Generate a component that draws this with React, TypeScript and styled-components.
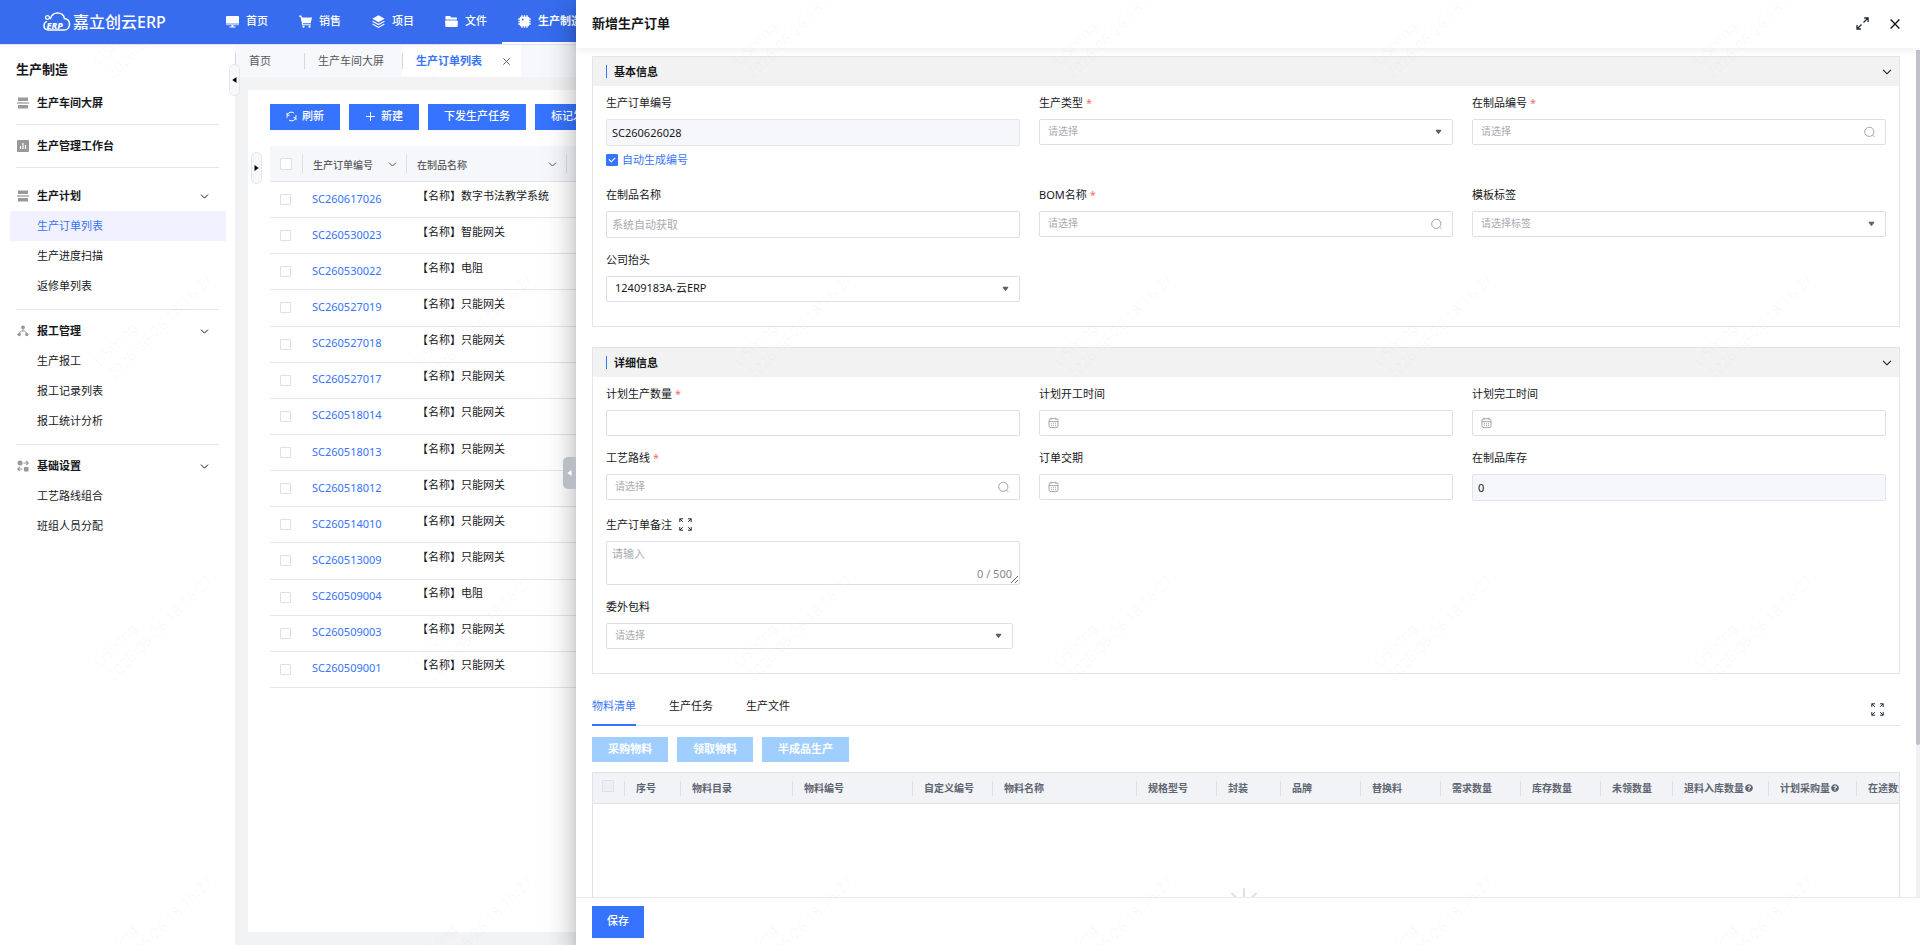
import React, { useId } from "react";
import styled, { createGlobalStyle, css } from "styled-components";
import { FaQuestionCircle } from "react-icons/fa";

const color = {
  brand: "#3673ff",
  header: "#376cee",
  text: "#17181c",
  muted: "#a8abb2",
  line: "#e3e5ea",
  input: "#dcdfe6",
};

const GlobalStyle = createGlobalStyle`
  *, *::before, *::after { box-sizing: border-box; }
  body { margin: 0; }
  body, button, input, select, textarea {
    font-family: "Noto Sans", "Noto Sans CJK SC", sans-serif;
    font-size: 11px;
    line-height: 16px;
    color: ${color.text};
  }
  button { border: 0; padding: 0; background: none; cursor: pointer; }
  a { color: inherit; text-decoration: none; }
  svg { display: block; flex: none; }
`;

/* ---------- icons ---------- */

const LogoMark = () => (
  <svg width="28" height="20" viewBox="0 0 28 20" fill="none" stroke="#fff" strokeWidth="1.5" strokeLinecap="round">
    <circle cx="4.5" cy="5.5" r="1.9" strokeWidth="1.2" />
    <path d="M7.5 6.5C8.5 3 11.3 1 14.5 1c3.6 0 6.4 2.3 7 5.6 3 .4 5 2.7 5 5.6 0 3.3-2.2 5.8-5.3 5.9H5.4C2.8 18 1 16.100 1 13.600c0-1.900 1-3.300 2.500-4" />
    <text x="3.500" y="16.500" fontSize="9" fontWeight="800" fontStyle="italic" fill="#fff" stroke="none">ERP</text>
  </svg>
);
const MonitorIcon = () => (
  <svg width="13" height="13" viewBox="0 0 13 13" fill="#fff">
    <path d="M1 1h11a1 1 0 0 1 1 1v6H0V2a1 1 0 0 1 1-1z" />
    <path d="M0 8h13v1.200a1 1 0 0 1-1 1H1a1 1 0 0 1-1-1z" opacity=".6" />
    <path d="M5.500 10h2v1.500h2v1h-6v-1h2z" />
  </svg>
);
const CartIcon = () => (
  <svg width="13" height="13" viewBox="0 0 13 13" fill="#fff">
    <path d="M0 .6h1.900c.4 0 .7.3.8.7l.2 1.200H13l-1.300 5.700H4l.2 1.100h7.600v1H3.300L1.500 1.700H0z" />
    <circle cx="4.500" cy="11.700" r="1.100" />
    <circle cx="10.500" cy="11.700" r="1.100" />
  </svg>
);
const LayersIcon = () => (
  <svg width="13" height="13" viewBox="0 0 13 13" fill="#fff">
    <path d="M6.500.3 12.600 3.700 6.500 7.200.4 3.700z" />
    <path d="M.6 6.300l5.900 3.300 5.900-3.300M.6 9.100l5.900 3.300 5.900-3.300" fill="none" stroke="#fff" strokeWidth="1.200" />
  </svg>
);
const FolderIcon = () => (
  <svg width="13" height="13" viewBox="0 0 13 13" fill="#fff">
    <path d="M.5 1H5l1.300 1.600H12v2H.5z" />
    <path d="M.5 4.600H12v1.500H.5z" opacity=".6" />
    <path d="M0 6.100h13l-.5 5.900H.5z" />
  </svg>
);
const ChipIcon = () => (
  <svg width="13" height="13" viewBox="0 0 13 13">
    <path d="M4 .3v12.400M6.500.3v12.400M9 .3v12.400M.3 4h12.400M.3 6.500h12.400M.3 9h12.400" stroke="#fff" strokeWidth="1.400" />
    <rect x="1.800" y="1.800" width="9.400" height="9.400" rx="1" fill="#fff" />
    <circle cx="4.800" cy="4.500" r=".9" fill={color.header} />
  </svg>
);
const ScreenIcon = () => (
  <svg width="12" height="12" viewBox="0 0 12 12" fill="#999">
    <path d="M1 .5h10V4H1zM1 8h10v3.500H1z" />
    <path d="M0 5h12v2H0z" opacity=".65" />
  </svg>
);
const BenchIcon = () => (
  <svg width="12" height="12" viewBox="0 0 12 12">
    <rect x="0" y="0" width="12" height="12" rx="1" fill="#999" />
    <path d="M3.500 9V6M6 9V3M8.500 9V5" stroke="#fff" strokeWidth="1.200" />
  </svg>
);
const TreeIcon = () => (
  <svg width="12" height="12" viewBox="0 0 12 12" fill="#999">
    <circle cx="6" cy="2.300" r="1.900" />
    <circle cx="2.200" cy="9.500" r="1.700" />
    <circle cx="9.800" cy="9.500" r="1.700" />
    <path d="M6 4v2M2.500 8C3 6.500 4 6 6 6s3 .5 3.500 2" fill="none" stroke="#999" strokeWidth="1" />
  </svg>
);
const FlowIcon = () => (
  <svg width="12" height="12" viewBox="0 0 12 12" fill="#999">
    <circle cx="3" cy="3" r="2.500" />
    <rect x="7" y="7" width="4.500" height="4.500" rx=".8" />
    <path d="M6.500 3h4.500M9.300 1l2 2-2 2M5.500 9H1M2.700 7l-2 2 2 2" fill="none" stroke="#999" strokeWidth="1.100" />
  </svg>
);
const Chevron = ({ size = 9 }: { size?: number }) => (
  <svg width={size} height={size} viewBox="0 0 9 9" fill="none" stroke="currentColor" strokeWidth="1">
    <path d="M1 2.600l3.500 3.500L8 2.600" />
  </svg>
);
const RefreshIcon = () => (
  <svg width="11" height="11" viewBox="0 0 11 11" fill="none" stroke="#fff" strokeWidth="1">
    <path d="M9.800 6.800A4.400 4.400 0 0 1 3 9M1.200 4.200A4.400 4.400 0 0 1 8 2M1.100 6.800A4.400 4.400 0 0 1 1 5M9.900 4.200a4.400 4.400 0 0 1 .1 1.800" />
    <path d="M1 1.800v2.500h2.500M10 9.200V6.700H7.500" />
  </svg>
);
const PlusIcon = () => (
  <svg width="11" height="11" viewBox="0 0 11 11" stroke="#fff" strokeWidth="1">
    <path d="M5.500 1v9M1 5.500h9" />
  </svg>
);
const CloseIcon = ({ size = 10, weight = 1.4 }: { size?: number; weight?: number }) => (
  <svg width={size} height={size} viewBox="0 0 10 10" stroke="currentColor" strokeWidth={weight}>
    <path d="M.6.6l8.800 8.800M9.400.6L.6 9.400" />
  </svg>
);
const EnlargeIcon = () => (
  <svg width="13" height="13" viewBox="0 0 13 13" fill="none" stroke="#222b36" strokeWidth="1.300">
    <path d="M8.200 1h3.900v3.900M12 1L7.500 5.500M4.900 12H1V8.100M1 12l4.500-4.500" />
  </svg>
);
const FullscreenIcon = () => (
  <svg width="13" height="13" viewBox="0 0 13 13" fill="none" stroke="#222b36" strokeWidth="1">
    <path d="M.8 4V.8H4M.8.800l3 3M9 .8h3.200V4M12.200.8l-3 3M.8 9v3.200H4M.8 12.200l3-3M9 12.200h3.200V9M12.200 12.200l-3-3" />
  </svg>
);
const SearchIcon = () => (
  <svg width="11" height="11" viewBox="0 0 11 11" fill="none" stroke="#a0a3aa" strokeWidth="1">
    <circle cx="5.300" cy="5.300" r="4.600" />
    <path d="M8.600 8.600l1.700 1.700" />
  </svg>
);
const CaretIcon = () => (
  <svg width="7" height="6" viewBox="0 0 7 6" fill="#5c6070">
    <path d="M1.200.8h4.600a.6.6 0 0 1 .4 1L3.900 4.800a.6.600 0 0 1-.8 0L.8 1.800a.6.600 0 0 1 .4-1z" />
  </svg>
);
const CalendarIcon = () => (
  <svg width="11" height="11" viewBox="0 0 11 11" fill="none" stroke="#a0a3aa" strokeWidth="1">
    <rect x="1" y="1.200" width="9" height="9" rx="2" />
    <path d="M1 4.200h9M3.200 0v2M7.800 0v2" />
    <path d="M3 6.300h1M5 6.300h1M7 6.300h1M3 8.200h1M5 8.200h1M7 8.200h1" />
  </svg>
);
const SpinnerIcon = () => (
  <svg width="34" height="34" viewBox="0 0 34 34" stroke="#dfe1e6" strokeWidth="2" strokeLinecap="round">
    <path d="M17 1v8M17 25v8M1 17h8M25 17h8M5 5.500l6 6M23 23l6 6M29 5.500l-6 6M11 23l-6 6" />
  </svg>
);
const Triangle = ({ left, fill = "#000" }: { left?: boolean; fill?: string }) => (
  <svg width="5" height="6" viewBox="0 0 5 6" fill={fill}>
    <path d={left ? "M4.500 0v6L.3 3z" : "M.5 0v6l4.200-3z"} />
  </svg>
);

/* ---------- shell ---------- */

const Shell = styled.div`
  position: relative;
  display: flex;
  flex-direction: column;
  height: 100vh;
  min-height: 700px;
  overflow: hidden;
  background: #f2f3f5;
`;
const TopBar = styled.header`
  display: flex;
  flex: none;
  height: 45px;
  background: ${color.header};
  border-bottom: 1px solid ${color.line};
`;
const Logo = styled.a`
  display: flex;
  align-items: center;
  gap: 2px;
  width: 210px;
  padding-left: 43px;
  font-size: 16px;
  font-weight: 500;
  color: #fff;
`;
const Nav = styled.nav`
  display: flex;
`;
const NavItem = styled.a<{ $active?: boolean }>`
  display: flex;
  align-items: center;
  gap: 7px;
  padding: 0 15px 2px 16px;
  color: #fff;
  font-weight: ${(p) => (p.$active ? 700 : 500)};
  box-shadow: ${(p) => (p.$active ? "inset 0 -2px 0 #fff" : "none")};
  white-space: nowrap;
`;
const Columns = styled.div`
  display: flex;
  flex: 1;
  min-height: 0;
`;
const Sidebar = styled.aside`
  position: relative;
  flex: none;
  width: 235px;
  padding: 15px 9px 0 10px;
  background: #fff;
`;
const SidebarTitle = styled.h1`
  margin: 0 0 10px;
  padding-left: 6px;
  font-size: 13px;
  line-height: 18px;
  font-weight: 700;
`;
const Group = styled.section<{ $spaced?: boolean; $single?: boolean }>`
  margin-bottom: ${(p) => (p.$spaced ? 13 : 6)}px;
  &:not(:last-of-type)::after {
    content: "";
    display: block;
    height: 1px;
    margin: ${(p) => (p.$single ? 6 : 8)}px 7px 0 6px;
    background: ${color.line};
  }
`;
const GroupHead = styled.button`
  display: flex;
  align-items: center;
  gap: 8px;
  width: 100%;
  height: 30px;
  padding: 0 17px 0 7px;
  font-weight: 700;
  text-align: left;
  span { flex: 1; }
`;
const SubLink = styled.a<{ $active?: boolean }>`
  display: flex;
  align-items: center;
  height: 30px;
  padding-left: 27px;
  color: ${(p) => (p.$active ? color.brand : color.text)};
  background: ${(p) => (p.$active ? "#f1f1ff" : "transparent")};
`;
const Pill = styled.button<{ $side: "sidebar" | "panel" }>`
  position: absolute;
  z-index: 1;
  display: flex;
  align-items: center;
  justify-content: center;
  width: 11px;
  height: 32px;
  border: 1px solid ${color.line};
  border-radius: 6px;
  background: #f7f8fa;
  ${(p) =>
    p.$side === "sidebar"
      ? css`
          top: 19px;
          right: -5px;
        `
      : css`
          top: 62px;
          left: 3px;
        `}
`;
const Main = styled.main`
  display: flex;
  flex-direction: column;
  flex: 1;
  min-width: 0;
  padding-bottom: 13px;
`;
const PageTabs = styled.nav`
  display: flex;
  flex: none;
  height: 32px;
  margin-bottom: 13px;
  background: #f7f8fb;
`;
const PageTab = styled.a<{ $active?: boolean; $wide?: boolean }>`
  position: relative;
  display: flex;
  align-items: center;
  gap: 21px;
  padding: 0 ${(p) => (p.$active ? 11 : p.$wide ? 33 : 18)}px 0 14px;
  color: ${(p) => (p.$active ? color.brand : "#55575c")};
  font-weight: ${(p) => (p.$active ? 700 : 400)};
  background: ${(p) => (p.$active ? "#fff" : "transparent")};
  &::before {
    content: "";
    position: absolute;
    left: 0;
    top: 8px;
    height: 16px;
    border-left: 1px solid #d5d7dc;
  }
  button { color: #55575c; }
`;
const Panel = styled.div`
  position: relative;
  flex: 1;
  min-height: 0;
  margin-left: 13px;
  padding: 14px 0 0 22px;
  background: #fff;
  overflow: hidden;
`;
const ButtonRow = styled.div<{ $gapBelow: number }>`
  display: flex;
  gap: 9px;
  margin-bottom: ${(p) => p.$gapBelow}px;
`;
const Button = styled.button<{ $size?: "small" | "large" }>`
  display: flex;
  align-items: center;
  justify-content: center;
  gap: 5px;
  height: ${(p) => (p.$size === "small" ? 25 : p.$size === "large" ? 32 : 26)}px;
  padding: 0 ${(p) => (p.$size === "large" ? 15 : 16)}px 2px;
  font-weight: 500;
  color: #fff;
  white-space: nowrap;
  background: ${color.brand};
  &:disabled {
    background: #a0cfff;
    font-weight: 700;
  }
`;

/* ---------- order list ---------- */

const OrderTable = styled.table`
  width: 100%;
  height: 542px;
  table-layout: fixed;
  border-spacing: 0;
  th, td {
    padding: 0;
    border-bottom: 1px solid #e5e6ea;
    text-align: left;
    font-weight: 400;
    white-space: nowrap;
  }
  thead th {
    position: relative;
    height: 36px;
    background: #f6f7fa;
    border-color: #e0e2ea;
    color: #5a5c62;
    font-size: 10px;
    font-weight: 500;
  }
  thead th:not(:last-child)::after {
    content: "";
    position: absolute;
    right: 0;
    top: 8px;
    height: 19px;
    border-right: 1px solid #dcdee4;
  }
  tbody td { height: 36px; }
`;
const HeadCell = styled.span`
  display: flex;
  align-items: center;
  justify-content: space-between;
  padding: 2px 10px 0 10px;
`;
const OrderLink = styled.a`
  display: block;
  padding: 0 0 2px 9px;
  color: ${color.brand};
`;
const ProductName = styled.span`
  display: block;
  padding: 0 0 8px 10px;
`;
const Box = styled.input.attrs({ type: "checkbox" })`
  appearance: none;
  position: relative;
  display: block;
  flex: none;
  width: 12px;
  height: 12px;
  margin: 0;
  border: 1px solid ${color.input};
  border-radius: 1px;
  background: #fff;
  td &, th & { margin-left: 10px; }
  td & { width: 11px; height: 11px; }
  &:disabled { margin-left: 9px; background: #edeff3; }
  &:checked {
    background: ${color.brand};
    border-color: ${color.brand};
  }
  &:checked::after {
    content: "";
    position: absolute;
    left: 3px;
    top: 1px;
    width: 4px;
    height: 6px;
    border: solid #fff;
    border-width: 0 1px 1px 0;
    transform: rotate(45deg);
  }
`;

/* ---------- drawer ---------- */

const Drawer = styled.aside`
  position: absolute;
  top: 0;
  right: 0;
  bottom: 0;
  z-index: 2;
  display: flex;
  flex-direction: column;
  width: 70%;
  background: #fff;
  box-shadow: 0 8px 10px -5px rgba(0, 0, 0, 0.2), 0 16px 24px 2px rgba(0, 0, 0, 0.14), 0 6px 30px 5px rgba(0, 0, 0, 0.12);
`;
const DrawerHandle = styled.button`
  position: absolute;
  left: -13px;
  top: calc(50% - 16px);
  display: flex;
  align-items: center;
  justify-content: center;
  width: 13px;
  height: 32px;
  border-radius: 5px 0 0 5px;
  background: #b9bec5;
`;
const DrawerHead = styled.header`
  position: relative;
  z-index: 1;
  display: flex;
  flex: none;
  align-items: center;
  gap: 21px;
  height: 48px;
  padding: 0 20px 1px 16px;
  background: #fff;
  box-shadow: 0 2px 8px rgba(0, 0, 0, 0.07);
  h2 {
    flex: 1;
    margin: 0;
    padding-bottom: 2px;
    font-size: 13px;
    line-height: 20px;
    font-weight: 700;
  }
`;
const DrawerBody = styled.div`
  position: relative;
  flex: 1;
  min-height: 0;
  padding: 8px 20px 0 16px;
  overflow: hidden;
`;
const ScrollTrack = styled.div`
  position: absolute;
  top: 2px;
  right: 0;
  bottom: 0;
  width: 4px;
  background: #f1f1f3;
  &::before {
    content: "";
    display: block;
    height: 82%;
    border-radius: 0 0 2px 2px;
    background: #bfc3c9;
  }
`;
const DrawerFoot = styled.footer`
  flex: none;
  display: flex;
  padding: 8px 16px 7px;
  border-top: 1px solid #e9eaed;
`;
const Card = styled.section`
  margin-bottom: 20px;
  border: 1px solid ${color.line};
`;
const CardHead = styled.header`
  display: flex;
  align-items: center;
  height: 29px;
  padding: 0 7px 0 13px;
  background: #f2f2f2;
  h3 {
    flex: 1;
    margin: 0;
    padding-left: 7px;
    font-size: 11px;
    line-height: 13px;
    font-weight: 700;
    border-left: 1px solid ${color.brand};
  }
`;
const Fields = styled.div`
  display: grid;
  grid-template-columns: repeat(3, 1fr);
  gap: 5px 19px;
  padding: 0 13px 24px;
`;
const FieldBox = styled.div<{ $row?: boolean; $inset?: boolean }>`
  min-width: 0;
  grid-column-start: ${(p) => (p.$row ? 1 : "auto")};
  padding-right: ${(p) => (p.$inset ? 7 : 0)}px;
`;
const FieldHead = styled.div<{ $tall?: boolean }>`
  display: flex;
  align-items: center;
  gap: 7px;
  height: ${(p) => (p.$tall ? 35 : 33)}px;
  padding-top: ${(p) => (p.$tall ? 2 : 0)}px;
`;
const Star = styled.span`
  margin-left: 3px;
  color: #f56c6c;
`;
const Control = styled.div`
  position: relative;
  > svg {
    position: absolute;
    top: 50%;
    right: 11px;
    transform: translateY(-50%);
    pointer-events: none;
  }
`;
const frame = css`
  display: block;
  width: 100%;
  border: 1px solid ${color.input};
  border-radius: 2px;
  background: #fff;
  outline: 0;
  &::placeholder { color: ${color.muted}; opacity: 1; }
`;
const TextInput = styled.input`
  ${frame}
  height: 27px;
  padding: 0 5px;
  &:disabled {
    background: #f5f7fb;
    border-color: ${color.line};
    color: ${color.text};
  }
`;
const PickInput = styled.input`
  ${frame}
  height: 26px;
  padding: 0 30px 2px 8px;
  font-size: 10px;
`;
const Select = styled.select<{ $filled?: boolean }>`
  ${frame}
  appearance: none;
  height: 26px;
  padding: 0 30px 2px 8px;
  font-size: ${(p) => (p.$filled ? 11 : 10)}px;
  color: ${(p) => (p.$filled ? color.text : color.muted)};
`;
const DateControl = styled(Control)`
  > svg { right: auto; left: 9px; }
`;
const Remark = styled.textarea`
  ${frame}
  height: 44px;
  padding: 4px 5px;
  resize: vertical;
`;
const Counter = styled.span`
  position: absolute;
  right: 8px;
  bottom: 3px;
  color: #85888f;
`;
const AutoNumber = styled.label`
  display: flex;
  align-items: center;
  gap: 4px;
  height: 27px;
  color: ${color.brand};
`;
const DetailTabs = styled.div`
  display: flex;
  align-items: flex-end;
  gap: 33px;
  margin-bottom: 11px;
  padding-right: 16px;
  border-bottom: 1px solid ${color.line};
  > :last-child { margin: 0 0 9px auto; }
`;
const DetailTab = styled.button<{ $active?: boolean }>`
  padding-bottom: 6px;
  margin-bottom: -1px;
  line-height: 24px;
  color: ${(p) => (p.$active ? color.brand : color.text)};
  border-bottom: 2px solid ${(p) => (p.$active ? color.brand : "transparent")};
`;
const MaterialWrap = styled.div`
  height: 260px;
  border: 1px solid #dfe1e8;
  overflow: hidden;
`;
const MaterialTable = styled.table`
  width: 1400px;
  table-layout: fixed;
  border-spacing: 0;
  th {
    position: relative;
    height: 31px;
    padding: 0 0 1px 11px;
    background: #f1f3f7;
    border-bottom: 1px solid #dfe1e8;
    color: #606370;
    font-size: 10px;
    font-weight: 700;
    text-align: left;
    white-space: nowrap;
  }
  th:first-child { padding: 0 0 5px; }
  th::after {
    content: "";
    position: absolute;
    right: 0;
    top: 8px;
    height: 15px;
    border-right: 1px solid #dcdee4;
  }
`;
const Hint = styled.span`
  display: inline-block;
  margin-left: 1px;
`;
const Loading = styled.div`
  display: flex;
  justify-content: center;
  padding: 84px 4px 0 0;
`;

/* ---------- watermark ---------- */

const WatermarkLayer = styled.div`
  position: absolute;
  z-index: 3;
  top: -132px;
  left: -7px;
  display: grid;
  grid-template-columns: repeat(7, 320px);
  grid-auto-rows: 301px;
  place-items: center;
  pointer-events: none;
`;
const Mark = styled.div`
  font-size: 15px;
  line-height: 19px;
  white-space: pre;
  color: rgba(150, 150, 150, 0.06);
  transform: rotate(-45deg);
`;

/* ---------- data ---------- */

const navItems = [
  { label: "首页", icon: <MonitorIcon /> },
  { label: "销售", icon: <CartIcon /> },
  { label: "项目", icon: <LayersIcon /> },
  { label: "文件", icon: <FolderIcon /> },
  { label: "生产制造", icon: <ChipIcon />, active: true },
];

const menu = [
  { label: "生产车间大屏", icon: <ScreenIcon />, items: [] },
  { label: "生产管理工作台", icon: <BenchIcon />, items: [] },
  { label: "生产计划", icon: <ScreenIcon />, items: ["生产订单列表", "生产进度扫描", "返修单列表"] },
  { label: "报工管理", icon: <TreeIcon />, items: ["生产报工", "报工记录列表", "报工统计分析"] },
  { label: "基础设置", icon: <FlowIcon />, items: ["工艺路线组合", "班组人员分配"] },
];

const orders: [string, string][] = [
  ["SC260617026", "数字书法教学系统"],
  ["SC260530023", "智能网关"],
  ["SC260530022", "电阻"],
  ["SC260527019", "只能网关"],
  ["SC260527018", "只能网关"],
  ["SC260527017", "只能网关"],
  ["SC260518014", "只能网关"],
  ["SC260518013", "只能网关"],
  ["SC260518012", "只能网关"],
  ["SC260514010", "只能网关"],
  ["SC260513009", "只能网关"],
  ["SC260509004", "电阻"],
  ["SC260509003", "只能网关"],
  ["SC260509001", "只能网关"],
];

const materialColumns: { label: string; width: number; hint?: boolean }[] = [
  { label: "序号", width: 56 },
  { label: "物料目录", width: 112 },
  { label: "物料编号", width: 120 },
  { label: "自定义编号", width: 80 },
  { label: "物料名称", width: 144 },
  { label: "规格型号", width: 80 },
  { label: "封装", width: 64 },
  { label: "品牌", width: 80 },
  { label: "替换料", width: 80 },
  { label: "需求数量", width: 80 },
  { label: "库存数量", width: 80 },
  { label: "未领数量", width: 72 },
  { label: "退料入库数量", width: 96, hint: true },
  { label: "计划采购量", width: 88, hint: true },
  { label: "在途数量", width: 136 },
];

/* ---------- fields ---------- */

type FieldProps = {
  label: string;
  required?: boolean;
  row?: boolean;
  inset?: boolean;
  action?: React.ReactNode;
  extra?: React.ReactNode;
  children: (id: string) => React.ReactNode;
};
const Field = ({ label, required, row, inset, action, extra, children }: FieldProps) => {
  const id = useId();
  return (
    <FieldBox $row={row} $inset={inset}>
      <FieldHead $tall={!!action}>
        <label htmlFor={id}>
          {label}
          {required && <Star>*</Star>}
        </label>
        {action}
      </FieldHead>
      {children(id)}
      {extra}
    </FieldBox>
  );
};
const SelectBox = ({ id, text, filled }: { id: string; text: string; filled?: boolean }) => (
  <Control>
    <Select id={id} $filled={filled}>
      <option>{text}</option>
    </Select>
    <CaretIcon />
  </Control>
);
const SearchBox = ({ id }: { id: string }) => (
  <Control>
    <PickInput id={id} placeholder="请选择" />
    <SearchIcon />
  </Control>
);
const DateBox = ({ id }: { id: string }) => (
  <DateControl>
    <PickInput id={id} />
    <CalendarIcon />
  </DateControl>
);

const OrderDrawer = () => (
  <Drawer>
    <DrawerHandle aria-label="收起">
      <Triangle left fill="#fff" />
    </DrawerHandle>
    <DrawerHead>
      <h2>新增生产订单</h2>
      <button aria-label="放大"><EnlargeIcon /></button>
      <button aria-label="关闭"><CloseIcon /></button>
    </DrawerHead>
    <DrawerBody>
      <Card>
        <CardHead>
          <h3>基本信息</h3>
          <button aria-label="折叠"><Chevron size={10} /></button>
        </CardHead>
        <Fields>
          <Field
            label="生产订单编号"
            extra={
              <AutoNumber>
                <Box defaultChecked />
                自动生成编号
              </AutoNumber>
            }
          >
            {(id) => <TextInput id={id} disabled defaultValue="SC260626028" />}
          </Field>
          <Field label="生产类型" required>{(id) => <SelectBox id={id} text="请选择" />}</Field>
          <Field label="在制品编号" required>{(id) => <SearchBox id={id} />}</Field>
          <Field label="在制品名称">{(id) => <TextInput id={id} placeholder="系统自动获取" />}</Field>
          <Field label="BOM名称" required>{(id) => <SearchBox id={id} />}</Field>
          <Field label="模板标签">{(id) => <SelectBox id={id} text="请选择标签" />}</Field>
          <Field label="公司抬头">{(id) => <SelectBox id={id} text="12409183A-云ERP" filled />}</Field>
        </Fields>
      </Card>

      <Card>
        <CardHead>
          <h3>详细信息</h3>
          <button aria-label="折叠"><Chevron size={10} /></button>
        </CardHead>
        <Fields>
          <Field label="计划生产数量" required>{(id) => <PickInput id={id} />}</Field>
          <Field label="计划开工时间">{(id) => <DateBox id={id} />}</Field>
          <Field label="计划完工时间">{(id) => <DateBox id={id} />}</Field>
          <Field label="工艺路线" required>{(id) => <SearchBox id={id} />}</Field>
          <Field label="订单交期">{(id) => <DateBox id={id} />}</Field>
          <Field label="在制品库存">{(id) => <TextInput id={id} disabled defaultValue="0" />}</Field>
          <Field label="生产订单备注" row action={<button aria-label="放大编辑"><FullscreenIcon /></button>}>
            {(id) => (
              <Control>
                <Remark id={id} placeholder="请输入" />
                <Counter>0 / 500</Counter>
              </Control>
            )}
          </Field>
          <Field label="委外包料" row inset>{(id) => <SelectBox id={id} text="请选择" />}</Field>
        </Fields>
      </Card>

      <DetailTabs>
        <DetailTab $active>物料清单</DetailTab>
        <DetailTab>生产任务</DetailTab>
        <DetailTab>生产文件</DetailTab>
        <button aria-label="全屏"><FullscreenIcon /></button>
      </DetailTabs>
      <ButtonRow $gapBelow={10}>
        <Button $size="small" disabled>采购物料</Button>
        <Button $size="small" disabled>领取物料</Button>
        <Button $size="small" disabled>半成品生产</Button>
      </ButtonRow>
      <MaterialWrap>
        <MaterialTable>
          <colgroup>
            <col width={32} />
            {materialColumns.map((c) => <col key={c.label} width={c.width} />)}
          </colgroup>
          <thead>
            <tr>
              <th><Box disabled aria-label="全选物料" /></th>
              {materialColumns.map((c) => (
                <th key={c.label}>
                  {c.label}
                  {c.hint && <Hint><FaQuestionCircle size={8} /></Hint>}
                </th>
              ))}
            </tr>
          </thead>
        </MaterialTable>
        <Loading><SpinnerIcon /></Loading>
      </MaterialWrap>
      <ScrollTrack />
    </DrawerBody>
    <DrawerFoot>
      <Button $size="large">保存</Button>
    </DrawerFoot>
  </Drawer>
);

export default function App() {
  return (
    <Shell>
      <GlobalStyle />
      <TopBar>
        <Logo href="#">
          <LogoMark />
          嘉立创云ERP
        </Logo>
        <Nav>
          {navItems.map((n) => (
            <NavItem key={n.label} href="#" $active={n.active}>
              {n.icon}
              {n.label}
            </NavItem>
          ))}
        </Nav>
      </TopBar>
      <Columns>
        <Sidebar>
          <SidebarTitle>生产制造</SidebarTitle>
          {menu.map((g, i) => (
            <Group key={g.label} $single={g.items.length === 0} $spaced={i === 1}>
              <GroupHead>
                {g.icon}
                <span>{g.label}</span>
                {g.items.length > 0 && <Chevron />}
              </GroupHead>
              {g.items.map((t) => (
                <SubLink key={t} href="#" $active={t === "生产订单列表"}>{t}</SubLink>
              ))}
            </Group>
          ))}
          <Pill $side="sidebar" aria-label="收起菜单"><Triangle left /></Pill>
        </Sidebar>
        <Main>
          <PageTabs>
            <PageTab href="#" $wide>首页</PageTab>
            <PageTab href="#">生产车间大屏</PageTab>
            <PageTab as="div" $active>
              <a href="#">生产订单列表</a>
              <button aria-label="关闭标签"><CloseIcon size={7} weight={1.4} /></button>
            </PageTab>
          </PageTabs>
          <Panel>
            <Pill $side="panel" aria-label="展开分类"><Triangle /></Pill>
            <ButtonRow $gapBelow={16}>
              <Button><RefreshIcon />刷新</Button>
              <Button><PlusIcon />新建</Button>
              <Button>下发生产任务</Button>
              <Button>标记发料</Button>
            </ButtonRow>
            <OrderTable>
              <colgroup>
                <col width={33} />
                <col width={104} />
                <col width={160} />
                <col />
              </colgroup>
              <thead>
                <tr>
                  <th><Box aria-label="全选" /></th>
                  <th><HeadCell>生产订单编号<Chevron /></HeadCell></th>
                  <th><HeadCell>在制品名称<Chevron /></HeadCell></th>
                  <th />
                </tr>
              </thead>
              <tbody>
                {orders.map(([no, name]) => (
                  <tr key={no}>
                    <td><Box aria-label={no} /></td>
                    <td><OrderLink href="#">{no}</OrderLink></td>
                    <td><ProductName>【名称】{name}</ProductName></td>
                    <td />
                  </tr>
                ))}
              </tbody>
            </OrderTable>
          </Panel>
        </Main>
      </Columns>
      <OrderDrawer />
      <WatermarkLayer aria-hidden="true">
        {Array.from({ length: 28 }, (_, i) => (
          <Mark key={i}>{"LiSiYing\n2026-06-26 18:16:27"}</Mark>
        ))}
      </WatermarkLayer>
    </Shell>
  );
}
